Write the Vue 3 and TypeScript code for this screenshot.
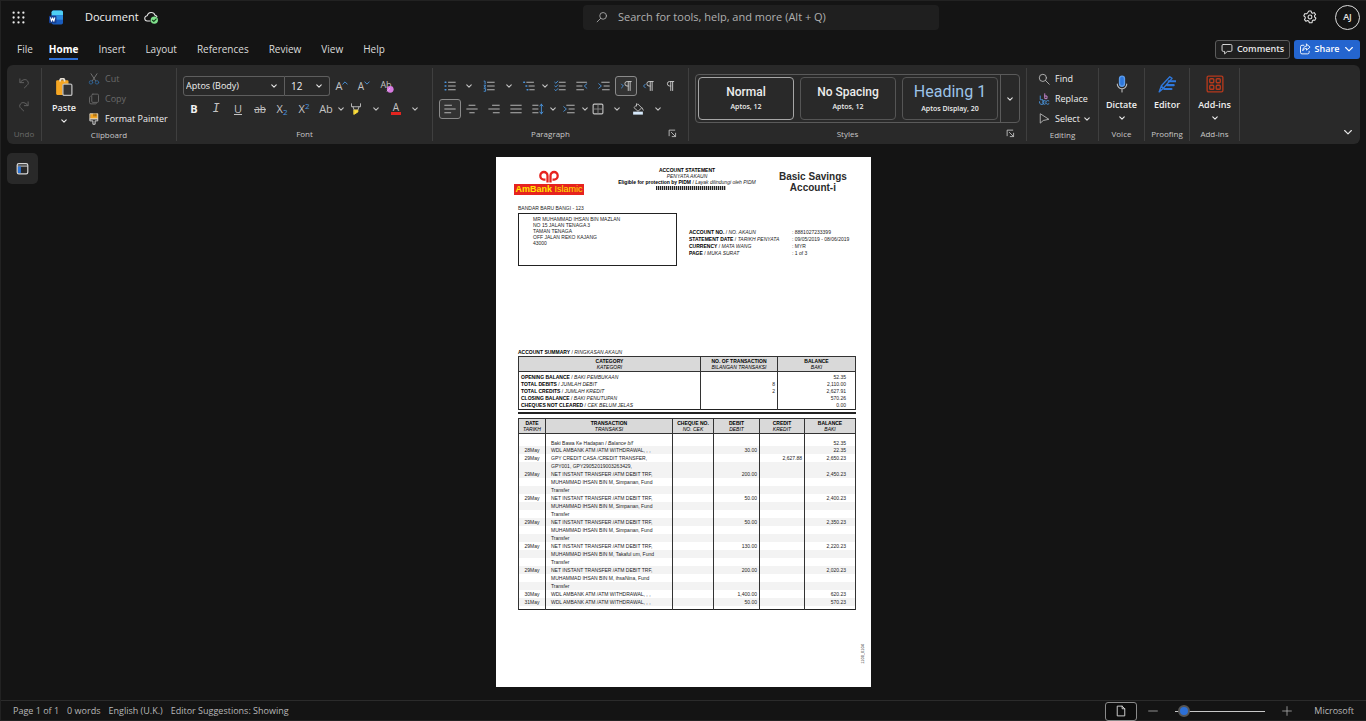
<script setup lang="ts">
import { h, ref, type FunctionalComponent } from 'vue'

const art: Record<string, string> = {
  chevron: '<path d="M5 6.5 8 9.5l3-3" stroke-width="1.5"/>',
  wide: '<path d="m3.500 6 4.500 4.500L12.500 6" stroke-width="1.500"/>',
  tipup: '<path d="m2 11 6-6 6 6" stroke-width="2.500"/>',
  tipdown: '<path d="m2 5 6 6 6-6" stroke-width="2.500"/>',
  search: '<circle cx="9.5" cy="6.5" r="4.5"/><path d="M6.2 9.8 1.5 14.5"/>',
  find: '<circle cx="6.5" cy="6.5" r="4.8"/><path d="m10 10 5 5"/>',
  cloud: '<path d="M7 12.5H4a3 3 0 0 1-.3-6A4.6 4.6 0 0 1 12.6 6c1 .2 1.8.8 2.2 1.6"/><circle cx="11.8" cy="11.5" r="4.2" fill="#7fe08c" stroke="none"/><path d="m9.8 11.7 1.4 1.4 2.6-2.8" stroke="#143d1a" stroke-width="1.3"/>',
  gear: '<circle cx="8" cy="8" r="2.2"/><path d="M6.7 1.2h2.6l.4 1.9 1.2.6 1.9-.7 1.6 2.1-1.3 1.5.2 1.4 1.5 1.2-1.1 2.4-2-.1-1.1 1-.2 2H7.300l-.8-1.900-1.300-.5-1.800.8-1.700-2 1-1.700-.3-1.400L.9 6.700l1-2.400 2 .1 1.200-.9z"/>',
  comment: '<path d="M3 2h10a1.600 1.600 0 0 1 1.600 1.600v6A1.600 1.600 0 0 1 13 11.200H8.500L4.800 14.500v-3.300H3A1.600 1.600 0 0 1 1.400 9.600v-6A1.600 1.600 0 0 1 3 2z"/>',
  share: '<path d="M6.500 3H4a2 2 0 0 0-2 2v7.500a2 2 0 0 0 2 2h7.500a2 2 0 0 0 2-2v-1.500M10 1.500l4.800 4-4.800 4V7.200C7.300 7.200 6 8.500 5 10.500c0-3.500 1.800-6.200 5-6.500z"/>',
  undo: '<path d="M2.500 2.500v5h5M3 7c3-4 7.500-4.500 9.500-2s1.500 4.500-.5 6.200L8.500 14.500"/>',
  redo: '<path d="M13.500 2.500v5h-5M13 7c-3-4-7.500-4.500-9.500-2s-1.500 4.500.5 6.200l3.500 3.300"/>',
  paste: '<rect x="1" y="2" width="11" height="13" rx="1" fill="#f5a623" stroke="none"/><path d="M4.500 2.500a2 2 0 0 1 4 0" stroke="#e8e1d5" stroke-width="1.600"/><rect x="7" y="5.500" width="8" height="10" rx="1.200" fill="#333" stroke="#b8b8b8"/>',
  cut: '<path d="m4 1 6.200 9.500M12 1 5.800 10.500" stroke="#777"/><circle cx="4" cy="12.500" r="2.300" stroke="#2f6395"/><circle cx="12" cy="12.500" r="2.300" stroke="#2f6395"/>',
  copy: '<rect x="5" y="1.500" width="9" height="11" rx="1.500"/><path d="M3 4.500A1.500 1.500 0 0 0 2 6v6.500a2 2 0 0 0 2 2h6a1.500 1.500 0 0 0 1.500-1"/>',
  painter: '<path d="M3 1h10v7H3z" fill="#f5a623" stroke="#e8d9bd"/><path d="M3 8h10v2.500H9.500V15h-3v-4.500H3z" fill="#333" stroke="#ddd"/><path d="M8 1v3M10.500 1v3" stroke="#7a4b00"/>',
  clear: '<circle cx="11" cy="11" r="4.500" fill="#d77be0" stroke="none"/><path d="m7 13.500 3.500-4" stroke="#efb9f4"/>',
  highlight: '<path d="M2 1v4h12V1M4 5l1.500 4.500h5L12 5"/><path d="M5.500 9.500h5v2.500l-5 3z" fill="#ffe03b" stroke="#ffe03b"/>',
  bullets: '<path d="M6 3h9M6 8h9M6 13h9"/><path d="M1.500 3h1M1.500 8h1M1.500 13h1" stroke="#4b96e0" stroke-width="2"/>',
  numbers: '<path d="M6 3h9M6 8h9M6 13h9"/><path d="M1.500 1.500h1.300V5M1.500 7h2L1.500 9.500h2M1.500 11.500h2v3.500h-2" stroke="#4b96e0"/>',
  multilevel: '<path d="M5 3h9M8 8h7M9 13h6"/><path d="M1 3h1M4 8h1M5.500 13h1" stroke="#4b96e0" stroke-width="2"/>',
  checklist: '<path d="M7 3h8M7 8h8M7 13h8"/><path d="m1 3 1.500 1.300L5 1.500M1 8l1.500 1.300L5 6.500M1 13l1.500 1.300L5 11.500" stroke="#4b96e0"/>',
  outdent: '<path d="M1 3h13M1 8h7M1 13h9"/><path d="m14.500 5-3.500 3 3.500 3" stroke="#4b96e0"/>',
  indent: '<path d="M5 3h10M8 8h7M6 13h9"/><path d="m1 5 3.500 3L1 11" stroke="#4b96e0"/>',
  ltr: '<path d="M15 2H9.500a3 3 0 0 0 0 6H11M11 2v12M13.500 2v12" stroke-width="1.300"/><path d="m2 5.500 2.500 2.500L2 10.500" stroke="#4b96e0"/>',
  rtl: '<path d="M15 2H9.500a3 3 0 0 0 0 6H11M11 2v12M13.500 2v12" stroke-width="1.300"/><path d="M4.500 5.500 2 8l2.500 2.500" stroke="#4b96e0"/>',
  pilcrow: '<path d="M13 2H7.500a3 3 0 0 0 0 6H9M9 2v12M11.500 2v12" stroke-width="1.300"/>',
  left: '<path d="M1 3h9M1 8h14M1 13h8"/>',
  center: '<path d="M4 3h8M1 8h14M5 13h6"/>',
  right: '<path d="M6 3h9M1 8h14M7 13h8"/>',
  justify: '<path d="M1 3h14M1 8h14M1 13h14"/>',
  spacing: '<path d="M1 3h7M1 8h7M1 13h7"/><path d="M12.500 1.500v13M10.500 4l2-2.500 2 2.500M10.500 12l2 2.500 2-2.500" stroke="#4b96e0"/>',
  borders: '<rect x="1.500" y="1.500" width="13" height="13" rx="1.500" stroke-width="1.500"/><path d="M8 2v12M2 8h12" stroke="#888"/>',
  shading: '<path d="m8 1.500 5 5-5 4.500-5-4.500z"/><path d="M6 1v3M13.500 6.500l1.500 3" /><path d="M1.500 11.500h13v4h-13z" fill="#d6e9fb" stroke="none"/>',
  launcher: '<path d="M2 12V2h10M6 6l7 7M13.500 7.500v6h-6" stroke-width="1.500"/>',
  replace: '<path d="M3 4v5h3M2 11.500a3 3 0 1 0 4-2M10 10.500a2.500 2.500 0 1 0 0 4" stroke="#4b96e0"/><path d="M9 1v6.500h3V4H9" stroke="#d08bd8"/><path d="M14.500 10.500a2.500 2.500 0 1 0 0 4" stroke="#4b96e0"/>',
  select: '<path d="M3 1.500v12L7 10l7-1.500z"/>',
  mic: '<rect x="5.800" y="1" width="4.400" height="9" rx="2.200" fill="#2f78dc" stroke="#5b9bea"/><path d="M3.800 8a4.200 4.200 0 0 0 8.400 0M8 12.500v2.500" stroke="#b9b9b9" stroke-width="1"/>',
  editor: '<path d="M1 15 3 9.500 10.500 1.500l2 1.500L4.500 12zM3 9.500l1.500 2.500" stroke="#2f78dc" stroke-width="1.200"/><path d="M9.500 5.500H16M8 9h6M5.500 12.500H12" stroke="#2f78dc" stroke-width="1.800"/>',
  addins: '<rect x="1" y="1" width="14" height="14" rx="1.200" stroke="#b5391c"/><rect x="3.300" y="3.300" width="3.600" height="3.600" rx=".8" stroke="#b5391c"/><rect x="9.100" y="3.300" width="3.600" height="3.600" rx=".8" stroke="#b5391c"/><rect x="3.300" y="9.100" width="3.600" height="3.600" rx=".8" stroke="#b5391c"/><rect x="9.100" y="9.100" width="3.600" height="3.600" rx=".8" stroke="#b5391c"/>',
  pane: '<rect x="1.500" y="2" width="13" height="12.500" rx="2" stroke="#d5d5d5" stroke-width="1.500"/><path d="M2 5h12" stroke="#d5d5d5"/><path d="M2.500 5.500h3.500v8H2.500z" fill="#2f78dc" stroke="none"/>',
  page: '<path d="M3.500 1.500h6L13 5v9.500H3.500zM9.500 1.500V5H13"/>',
  minus: '<path d="M1 8h14"/>',
  plus: '<path d="M1 8h14M8 1v14"/>',
  waffle: [2, 8, 14].map(y => [2, 8, 14].map(x => `<circle cx="${x}" cy="${y}" r="1.400" fill="#eee" stroke="none"/>`).join('')).join(''),
  word: '<rect x="3" y="0" width="13" height="16" rx="2" fill="#1a5dbe" stroke="none"/><path d="M5 0h9a2 2 0 0 1 2 2v3.500H3V2a2 2 0 0 1 2-2z" fill="#4fd0f5" stroke="none"/><path d="M3 5.500h13v5H3z" fill="#2b8be0" stroke="none"/><rect x="0" y="6" width="8.500" height="8.500" rx="1.200" fill="#173f91" stroke="none"/><path d="m1.800 8.300 1.100 4 1.300-4 1.300 4 1.100-4" stroke="#fff"/>',
}

const Icon: FunctionalComponent<{ name: string }> = (props) =>
  h('svg', { viewBox: '0 0 16 16', class: 'icon', 'aria-hidden': 'true', innerHTML: art[props.name] })
Icon.props = ['name']

const tabs = ['File', 'Home', 'Insert', 'Layout', 'References', 'Review', 'View', 'Help']
const zoom = ref(4)
const family = ref('Aptos (Body)')
const size = ref('12')

interface Tool { icon: string; w: string; label: string; on?: boolean }
const t = (icon: string, w: string, label: string, on = false): Tool => ({ icon, w, label, on })
const listTools: Tool[] = [
  t('bullets', 'w22', 'Bullets'), t('chevron', 'w16', 'Bullet options'),
  t('numbers', 'w24', 'Numbering'), t('chevron', 'w16', 'Numbering options'),
  t('multilevel', 'w24', 'Multilevel list'), t('chevron', 'w8', 'Multilevel options'),
  t('checklist', 'w22', 'Checklist'), t('outdent', 'w22', 'Decrease indent'),
  t('indent', 'w22', 'Increase indent'), t('ltr', 'w22', 'Left to right', true),
  t('rtl', 'w22', 'Right to left'), t('pilcrow', 'w22', 'Show marks'),
]
const alignTools: Tool[] = [
  t('left', 'w22', 'Align left', true), t('center', 'w22', 'Centre'),
  t('right', 'w22', 'Align right'), t('justify', 'w22', 'Justify'),
  t('spacing', 'w22', 'Line spacing'), t('chevron', 'w8', 'Spacing options'),
  t('indent', 'w24', 'Special indent'), t('chevron', 'w8', 'Indent options'),
  t('borders', 'w18', 'Borders'), t('chevron', 'w20', 'Border options'),
  t('shading', 'w22', 'Shading'), t('chevron', 'w18', 'Shading options'),
]
const styles = [
  { name: 'Normal', note: 'Aptos, 12', kind: 'current' },
  { name: 'No Spacing', note: 'Aptos, 12', kind: '' },
  { name: 'Heading 1', note: 'Aptos Display, 20', kind: 'heading' },
]

const address = ['MR MUHAMMAD IHSAN BIN MAZLAN', 'NO 15 JALAN TENAGA 3', 'TAMAN TENAGA', 'OFF JALAN REKO KAJANG', '43000']
const facts = [
  ['ACCOUNT NO.', 'NO. AKAUN', '8881027233399'],
  ['STATEMENT DATE', 'TARIKH PENYATA', '09/05/2019 - 08/06/2019'],
  ['CURRENCY', 'MATA WANG', 'MYR'],
  ['PAGE', 'MUKA SURAT', '1 of 3'],
]
const summary = [
  ['OPENING BALANCE', 'BAKI PEMBUKAAN', '', '52.35'],
  ['TOTAL DEBITS', 'JUMLAH DEBIT', '8', '2,110.00'],
  ['TOTAL CREDITS', 'JUMLAH KREDIT', '2', '2,627.91'],
  ['CLOSING BALANCE', 'BAKI PENUTUPAN', '', '570.26'],
  ['CHEQUES NOT CLEARED', 'CEK BELUM JELAS', '', '0.00'],
]
const heads = [
  ['DATE', 'TARIKH'], ['TRANSACTION', 'TRANSAKSI'], ['CHEQUE NO.', 'NO. CEK'],
  ['DEBIT', 'DEBIT'], ['CREDIT', 'KREDIT'], ['BALANCE', 'BAKI'],
]
const net = 'NET INSTANT TRANSFER /ATM DEBIT TRF,'
const wdl = 'WDL AMBANK ATM /ATM WITHDRAWAL, , ,'
const owner = 'MUHAMMAD IHSAN BIN M, '
const rows: string[][] = [
  ['28May', wdl, '30.00', '', '22.35'],
  ['29May', 'GPY CREDIT CASA /CREDIT TRANSFER,', '', '2,627.88', '2,650.23'],
  ['', 'GPY001, GPY29052019003263429,', '', '', ''],
  ['29May', net, '200.00', '', '2,450.23'], ['', owner + 'Simpanan, Fund', '', '', ''], ['', 'Transfer', '', '', ''],
  ['29May', net, '50.00', '', '2,400.23'], ['', owner + 'Simpanan, Fund', '', '', ''], ['', 'Transfer', '', '', ''],
  ['29May', net, '50.00', '', '2,350.23'], ['', owner + 'Simpanan, Fund', '', '', ''], ['', 'Transfer', '', '', ''],
  ['29May', net, '130.00', '', '2,220.23'], ['', owner + 'Takaful um, Fund', '', '', ''], ['', 'Transfer', '', '', ''],
  ['29May', net, '200.00', '', '2,020.23'], ['', owner + 'ihsaNina, Fund', '', '', ''], ['', 'Transfer', '', '', ''],
  ['30May', wdl, '1,400.00', '', '620.23'],
  ['31May', wdl, '50.00', '', '570.23'],
]
</script>

<template>
  <div class="app">
    <header class="titlebar">
      <div class="brand">
        <button class="waffle" aria-label="App launcher"><Icon name="waffle" /></button>
        <span class="word"><Icon name="word" /></span>
        <span class="docname">Document</span>
        <span class="cloud"><Icon name="cloud" /></span>
      </div>
      <label class="search">
        <Icon name="search" />
        <input type="text" aria-label="Search" placeholder="Search for tools, help, and more (Alt + Q)">
      </label>
      <div class="account">
        <button class="gear" aria-label="Settings"><Icon name="gear" /></button>
        <button class="avatar">AJ</button>
      </div>
    </header>

    <div class="tabrow">
      <nav class="tabs">
        <a v-for="tab in tabs" :key="tab" href="#" :class="{ active: tab === 'Home' }">{{ tab }}</a>
      </nav>
      <button class="comments"><Icon name="comment" />Comments</button>
      <button class="share"><Icon name="share" />Share<Icon name="wide" /></button>
    </div>

    <section class="ribbon">
      <div class="group undo">
        <div class="stack">
          <button aria-label="Undo"><Icon name="undo" /></button>
          <button aria-label="Redo"><Icon name="redo" /></button>
        </div>
        <div class="caption"><span>Undo</span></div>
      </div>

      <div class="group clipboard">
        <div class="body">
          <button class="big paste"><Icon name="paste" /><span>Paste</span><Icon class="small" name="chevron" /></button>
          <div class="commands">
            <button disabled><Icon name="cut" />Cut</button>
            <button disabled><Icon name="copy" />Copy</button>
            <button class="strong"><Icon name="painter" />Format Painter</button>
          </div>
        </div>
        <div class="caption"><span>Clipboard</span></div>
      </div>

      <div class="group font">
        <div class="rows">
          <div class="row">
            <label class="combo family">
              <select v-model="family" aria-label="Font"><option>Aptos (Body)</option></select><Icon name="chevron" />
            </label>
            <label class="combo size">
              <select v-model="size" aria-label="Font size"><option>12</option></select><Icon name="chevron" />
            </label>
            <button class="tool w22 glyph" aria-label="Grow font">A<Icon class="tip" name="tipup" /></button>
            <button class="tool w22 glyph low" aria-label="Shrink font">A<Icon class="tip" name="tipdown" /></button>
            <button class="tool w22 erase" aria-label="Clear formatting"><span>Ab</span><Icon name="clear" /></button>
          </div>
          <div class="row">
            <button class="tool w22 glyph"><b>B</b></button>
            <button class="tool w22 glyph"><em>I</em></button>
            <button class="tool w22 glyph"><u>U</u></button>
            <button class="tool w22 glyph"><s>ab</s></button>
            <button class="tool w22 glyph">X<sub>2</sub></button>
            <button class="tool w22 glyph">X<sup>2</sup></button>
            <button class="tool w22 glyph">Ab</button>
            <button class="tool w8" aria-label="Case options"><Icon name="chevron" /></button>
            <button class="tool w22" aria-label="Highlight"><Icon name="highlight" /></button>
            <button class="tool w18" aria-label="Highlight options"><Icon name="chevron" /></button>
            <button class="tool w22 glyph"><span class="ink">A</span></button>
            <button class="tool w16" aria-label="Colour options"><Icon name="chevron" /></button>
          </div>
        </div>
        <div class="caption"><span>Font</span></div>
      </div>

      <div class="group paragraph">
        <div class="rows">
          <div class="row">
            <button v-for="x in listTools" :key="x.label" class="tool" :class="[x.w, { on: x.on }]" :aria-label="x.label"><Icon :name="x.icon" /></button>
          </div>
          <div class="row">
            <button v-for="x in alignTools" :key="x.label" class="tool" :class="[x.w, { on: x.on }]" :aria-label="x.label"><Icon :name="x.icon" /></button>
          </div>
        </div>
        <div class="caption"><span>Paragraph</span><button aria-label="Paragraph settings"><Icon name="launcher" /></button></div>
      </div>

      <div class="group styles">
        <div class="gallery">
          <button v-for="s in styles" :key="s.name" class="card" :class="s.kind"><strong>{{ s.name }}</strong><small>{{ s.note }}</small></button>
          <button class="more" aria-label="More styles"><Icon name="chevron" /></button>
        </div>
        <div class="caption"><span>Styles</span><button aria-label="Style settings"><Icon name="launcher" /></button></div>
      </div>

      <div class="group editing">
        <div class="commands">
          <button class="strong"><Icon name="find" />Find</button>
          <button class="strong"><Icon name="replace" />Replace</button>
          <button class="strong"><Icon name="select" />Select<Icon class="small" name="chevron" /></button>
        </div>
        <div class="caption"><span>Editing</span></div>
      </div>

      <div class="group voice">
        <button class="big"><Icon name="mic" /><span>Dictate</span><Icon class="small" name="chevron" /></button>
        <div class="caption"><span>Voice</span></div>
      </div>
      <div class="group proofing">
        <button class="big"><Icon name="editor" /><span>Editor</span></button>
        <div class="caption"><span>Proofing</span></div>
      </div>
      <div class="group addins">
        <button class="big"><Icon name="addins" /><span>Add-ins</span><Icon class="small" name="chevron" /></button>
        <div class="caption"><span>Add-ins</span></div>
      </div>
      <button class="collapse" aria-label="Collapse ribbon"><Icon name="wide" /></button>
    </section>

    <main class="canvas">
      <button class="pane" aria-label="Navigation pane"><Icon name="pane" /></button>
      <article class="sheet">
        <header class="letterhead">
          <div class="bank">
            <svg viewBox="0 0 20 13" aria-hidden="true">
              <path d="M8.500 12.500V5.800a3.600 3.800 0 1 0-3.600 3.800h1.600M11.500 12.500V5.800a3.600 3.800 0 1 1 3.600 3.800h-1.600" fill="none" stroke="#e6231f" stroke-width="2.300" />
            </svg>
            <p><b>AmBank</b> Islamic</p>
          </div>
          <div class="title">
            <b>ACCOUNT STATEMENT</b>
            <i>PENYATA AKAUN</i>
            <span><b>Eligible for protection by PIDM</b> / <i>Layak dilindungi oleh PIDM</i></span>
            <span class="barcode"></span>
          </div>
          <h1>Basic Savings<br>Account-i</h1>
        </header>

        <p class="branch">BANDAR BARU BANGI - 123</p>
        <div class="parties">
          <address><span v-for="line in address" :key="line">{{ line }}</span></address>
          <dl>
            <template v-for="f in facts" :key="f[0]">
              <dt><b>{{ f[0] }}</b> / <i>{{ f[1] }}</i></dt><dd>: {{ f[2] }}</dd>
            </template>
          </dl>
        </div>

        <p class="heading"><b>ACCOUNT SUMMARY</b> / <i>RINGKASAN AKAUN</i></p>
        <table class="summary">
          <colgroup><col class="c-cat"><col class="c-num"><col></colgroup>
          <thead>
            <tr>
              <th>CATEGORY<i>KATEGORI</i></th>
              <th>NO. OF TRANSACTION<i>BILANGAN TRANSAKSI</i></th>
              <th>BALANCE<i>BAKI</i></th>
            </tr>
          </thead>
          <tbody>
            <tr v-for="s in summary" :key="s[0]">
              <td><b>{{ s[0] }}</b> / <i>{{ s[1] }}</i></td><td class="num tight">{{ s[2] }}</td><td class="num">{{ s[3] }}</td>
            </tr>
          </tbody>
        </table>
        <hr>
        <table class="ledger">
          <colgroup><col class="c-date"><col class="c-text"><col class="c-chq"><col class="c-deb"><col class="c-cre"><col></colgroup>
          <thead>
            <tr><th v-for="x in heads" :key="x[0]">{{ x[0] }}<i>{{ x[1] }}</i></th></tr>
          </thead>
          <tbody>
            <tr class="first">
              <td></td><td>Baki Bawa Ke Hadapan / <i>Balance b/f</i></td><td></td><td></td><td></td><td class="num">52.35</td>
            </tr>
            <tr v-for="(r, i) in rows" :key="i" :class="{ band: i === 0 || i === 2 || (i > 2 && i % 2 === 1) }">
              <td>{{ r[0] }}</td><td>{{ r[1] }}</td><td></td><td class="num tight">{{ r[2] }}</td><td class="num tight">{{ r[3] }}</td><td class="num">{{ r[4] }}</td>
            </tr>
            <tr class="last"><td></td><td></td><td></td><td></td><td></td><td></td></tr>
          </tbody>
        </table>
        <span class="formno">1100_0104</span>
      </article>
    </main>

    <footer class="status">
      <span>Page 1 of 1</span><span>0 words</span><span>English (U.K.)</span><span>Editor Suggestions: Showing</span>
      <div class="zoom">
        <button class="view" aria-label="Print layout"><Icon name="page" /></button>
        <button class="step" aria-label="Zoom out"><Icon name="minus" /></button>
        <input v-model="zoom" type="range" min="0" max="100" aria-label="Zoom">
        <button class="step" aria-label="Zoom in"><Icon name="plus" /></button>
        <span>Microsoft</span>
      </div>
    </footer>
  </div>
</template>

<style>
body { margin: 0; background: #141414; }
.icon { width: 12px; height: 12px; flex: none; display: block; fill: none; stroke: currentColor; stroke-width: 1.2; stroke-linecap: round; stroke-linejoin: round; }
</style>

<style scoped>
* { box-sizing: border-box; }
.app {
  min-height: 100vh; display: flex; flex-direction: column; background: #141414; color: #e6e6e6;
  border: 1px solid #222; border-right: 0; font-family: "Open Sans", "Noto Sans", sans-serif; font-size: 10px; line-height: 12px;
}
button { font: inherit; color: inherit; background: none; border: 0; padding: 0; display: flex; align-items: center; justify-content: center; }
p, h1, dl, dd { margin: 0; }

.titlebar { display: grid; grid-template-columns: 582fr 356fr 427fr; align-items: center; height: 32px; }
.brand { display: flex; align-items: center; padding-left: 11px; }
.waffle .icon { width: 13px; height: 13px; }
.word { margin-left: 24px; }
.word .icon { width: 14px; height: 15px; }
.docname { margin: 0 5px 0 22px; font-size: 11px; color: #f2f2f2; }
.cloud .icon { width: 14px; height: 14px; }
.search { display: flex; align-items: center; gap: 10px; height: 25px; padding: 0 13px; background: #1f1f1f; border-radius: 4px; color: #a8a8a8; }
.search input { flex: 1; min-width: 0; border: 0; padding: 0; background: none; color: inherit; font: inherit; font-size: 11px; outline: 0; }
.search input::placeholder { color: #b0b0b0; opacity: 1; }
.account { display: flex; align-items: center; justify-content: flex-end; gap: 18px; padding-right: 6px; }
.gear .icon { width: 14px; height: 14px; }
.avatar { width: 25px; height: 25px; border: 1px solid #dcdcdc; border-radius: 50%; font-size: 9px; font-weight: 600; }

.tabrow { display: flex; align-items: center; height: 31px; padding: 1px 6px 0 16px; }
.tabs { display: flex; gap: 20px; flex: 1; }
.tabs a { color: #dcdcdc; text-decoration: none; line-height: 18px; padding-top: 1px; border-bottom: 2px solid transparent; }
.tabs a:first-child { margin-right: -4px; }
.tabs .active { color: #fff; font-weight: 700; border-color: #2c6fd6; }
.comments, .share { height: 19px; border-radius: 3px; gap: 4px; font-size: 9px; font-weight: 600; }
.comments { width: 75px; border: 1px solid #5c5c5c; background: #1f1f1f; margin-right: 4px; }
.share { width: 66px; background: #2465cf; color: #fff; }

.ribbon { display: flex; height: 79px; margin: 1px 6px 0; padding: 3px 0; background: #292929; border-radius: 6px; font-size: 9px; }
.group { display: flex; flex-direction: column; flex: none; border-right: 1px solid #3f3f3f; }
.caption { display: flex; margin-top: auto; height: 13px; font-size: 8px; color: #c8c8c8; }
.caption span { flex: 1; text-align: center; white-space: nowrap; }
.caption button { width: 20px; height: 10px; justify-content: flex-start; }
.caption .icon { width: 9px; height: 9px; }
.undo { width: 35px; color: #666; }
.undo .caption { color: #6a6a6a; }
.stack { display: flex; flex-direction: column; align-items: center; gap: 11px; padding-top: 9px; }
.clipboard { width: 135px; }
.font, .paragraph { width: 256px; }
.styles { width: 338px; }
.editing { width: 72px; }
.voice { width: 46px; }
.proofing { width: 45px; }
.addins { width: 50px; }
.body { display: flex; }
.big { flex-direction: column; width: 100%; padding-top: 7px; font-weight: 600; color: #f0f0f0; gap: 6px; }
.big .icon { width: 18px; height: 18px; }
.big .small { width: 12px; height: 12px; margin-top: -5px; }
.paste { width: 44px; }
.commands { display: flex; flex-direction: column; padding: 1px 0 0 2px; }
.commands button { height: 20px; justify-content: flex-start; gap: 5px; color: #6a6a6a; white-space: nowrap; }
.commands .strong { color: #f0f0f0; font-weight: 500; }
.commands .icon { color: #6a6a6a; }
.strong .icon { color: #b8b8b8; }
.commands .small { width: 12px; height: 12px; margin-left: -4px; color: #e0e0e0; }
.editing .commands { padding-left: 11px; }

.rows { padding: 8px 0 0 6px; display: flex; flex-direction: column; gap: 3px; }
.row { display: flex; height: 20px; align-items: center; }
.tool { height: 20px; flex: none; color: #c4c4c4; }
.w8 { width: 8px; }
.w16 { width: 16px; }
.w18 { width: 18px; }
.w20 { width: 20px; }
.w22 { width: 22px; }
.w24 { width: 24px; }
.on { border: 1px solid #8a8a8a; border-radius: 3px; background: #333; }
.combo { display: flex; align-items: center; height: 20px; border: 1px solid #5e5e5e; padding-right: 4px; }
.combo select { flex: 1; min-width: 0; height: 18px; appearance: none; border: 0; background: none; padding: 0 0 0 2px; color: #f0f0f0; font: inherit; font-weight: 500; outline: 0; }
.family { width: 102px; border-radius: 3px 0 0 3px; }
.size { width: 45px; border-left: 0; border-radius: 0 3px 3px 0; margin-right: 1px; }
.size select { padding-left: 6px; font-size: 10px; }
.glyph { font-size: 11px; }
.glyph b { color: #f2f2f2; }
.glyph em { font-family: "Liberation Mono", monospace; font-size: 12px; }
.tip { width: 6px; height: 6px; align-self: flex-start; margin-top: 4px; color: #4b96e0; }
.low { font-size: 10px; }
.glyph sub, .glyph sup { font-size: 8px; line-height: 8px; color: #4b96e0; }
.glyph sub { align-self: flex-end; margin-bottom: 3px; }
.glyph sup { align-self: flex-start; margin-top: 3px; }
.glyph s { font-size: 10px; }
.ink { border-bottom: 3px solid #e3241f; line-height: 9px; font-size: 10px; padding: 0 2px; }
.erase { position: relative; font-size: 9px; }
.erase span { margin-bottom: 3px; }
.erase .icon { position: absolute; right: 3px; bottom: 3px; }

.gallery { display: flex; gap: 6px; height: 49px; margin: 6px 6px 0 6px; padding: 2px 0 2px 2px; border: 1px solid #5a5a5a; border-radius: 4px; }
.card { flex: 0 0 96px; flex-direction: column; gap: 2px; border: 1px solid #555; border-radius: 4px; font-family: Roboto, sans-serif; color: #ededed; }
.card strong { font-size: 12px; line-height: 14px; font-weight: 500; }
.card small { font-family: "Open Sans", sans-serif; font-size: 7px; line-height: 12px; font-weight: 600; }
.current { border: 1px solid #a6a6a6; }
.heading.card strong { font-size: 16px; line-height: 18px; font-weight: 400; color: #9cc3e8; }
.more { flex: 1; margin: -2px 0 -2px -4px; border-left: 1px solid #5a5a5a; }
.collapse { margin: auto 0 3px auto; padding-right: 6px; }

.canvas { flex: 1; display: flex; align-items: flex-start; justify-content: center; padding: 13px 0; position: relative; }
.pane { position: absolute; left: 6px; top: 9px; width: 31px; height: 31px; border-radius: 5px; background: #292929; }
.pane .icon { width: 13px; height: 13px; }

.sheet {
  position: relative; width: 375px; min-height: 530px; background: #fff; color: #1c1c1c; padding: 10px 15px 0 22px;
  font-family: "Liberation Sans", Arial, sans-serif; font-size: 5px; line-height: 6px;
}
.sheet b { color: #000; }
.letterhead { display: flex; height: 37px; margin-left: -4px; }
.bank { width: 70px; display: flex; flex-direction: column; align-items: center; padding-top: 3px; }
.bank svg { width: 20px; height: 13px; }
.bank p { width: 70px; margin-top: 1px; background: #e6231f; color: #ffe600; font-size: 9px; line-height: 11px; text-align: center; white-space: nowrap; }
.bank b { color: #ffe600; }
.title { flex: 0 0 206px; display: flex; flex-direction: column; align-items: center; white-space: nowrap; }
.barcode { width: 70px; height: 4px; margin: 1px 0 0 8px; background: repeating-linear-gradient(90deg, #222 0 1px, #bbb 1px 2px); }
.letterhead h1 { flex: 0 0 66px; margin-left: -11px; padding-top: 4px; font-size: 10px; line-height: 11px; text-align: center; white-space: nowrap; color: #2b2b2b; }
.branch { line-height: 8px; }
.parties { display: flex; }
address { width: 159px; height: 53px; border: 1px solid #222; padding: 2px 0 0 14px; font-style: normal; display: flex; flex-direction: column; margin-top: 1px; }
dl { display: grid; grid-template-columns: 103px auto; align-content: start; padding: 17px 0 0 12px; line-height: 7px; white-space: nowrap; }
.sheet > .heading { margin-top: 83px; line-height: 7px; }
table { width: 338px; border-collapse: collapse; table-layout: fixed; border: 1px solid #222; }
th, td { padding: 0; border: 0 solid #333; border-width: 0 1px; white-space: nowrap; }
th { background: #d9d9d9; border: 1px solid #333; line-height: 6px; padding: 1px 0; color: #000; }
th i { display: block; font-weight: 400; }
.num { text-align: right; padding-right: 9px; }
.tight { padding-right: 2px; }
.c-cat { width: 182px; }
.c-num { width: 77px; }
.summary td { line-height: 7px; }
.summary td:first-child { padding-left: 2px; }
.summary tbody tr:first-child td { padding-top: 2px; }
hr { margin: 2px 0 4px; border: 0; height: 2px; background: #222; }
.c-date { width: 27px; }
.c-text { width: 127px; }
.c-chq { width: 41px; }
.c-deb { width: 46px; }
.c-cre { width: 45px; }
.ledger td { line-height: 8px; }
.ledger td:first-child { text-align: center; }
.ledger td:nth-child(2) { padding-left: 5px; }
.ledger .first td { padding-top: 6px; line-height: 6px; }
.ledger .last td { height: 3px; }
.ledger .band { background: #f3f3f3; }
.formno { position: absolute; right: 5px; bottom: 23px; writing-mode: vertical-rl; transform: rotate(180deg); font-size: 4px; }

.status { display: flex; align-items: center; gap: 8px; height: 20px; border-top: 1px solid #2b2b2b; padding: 1px 12px 0; font-size: 9px; color: #b8b8b8; }
.zoom { display: flex; align-items: center; margin-left: auto; }
.view { width: 32px; height: 19px; border: 1px solid #8a8a8a; border-radius: 3px; background: #0d0d0d; color: #ddd; }
.step { width: 32px; }
.step .icon { width: 10px; height: 10px; }
.zoom input { appearance: none; width: 90px; height: 12px; margin: 0 6px; background: linear-gradient(#c8c8c8, #c8c8c8) center / 100% 1px no-repeat; }
.zoom input::-webkit-slider-thumb { appearance: none; width: 12px; height: 12px; border-radius: 50%; background: #2c6fd6; border: 2px solid #555; }
.zoom > span { margin-left: 11px; }
</style>
